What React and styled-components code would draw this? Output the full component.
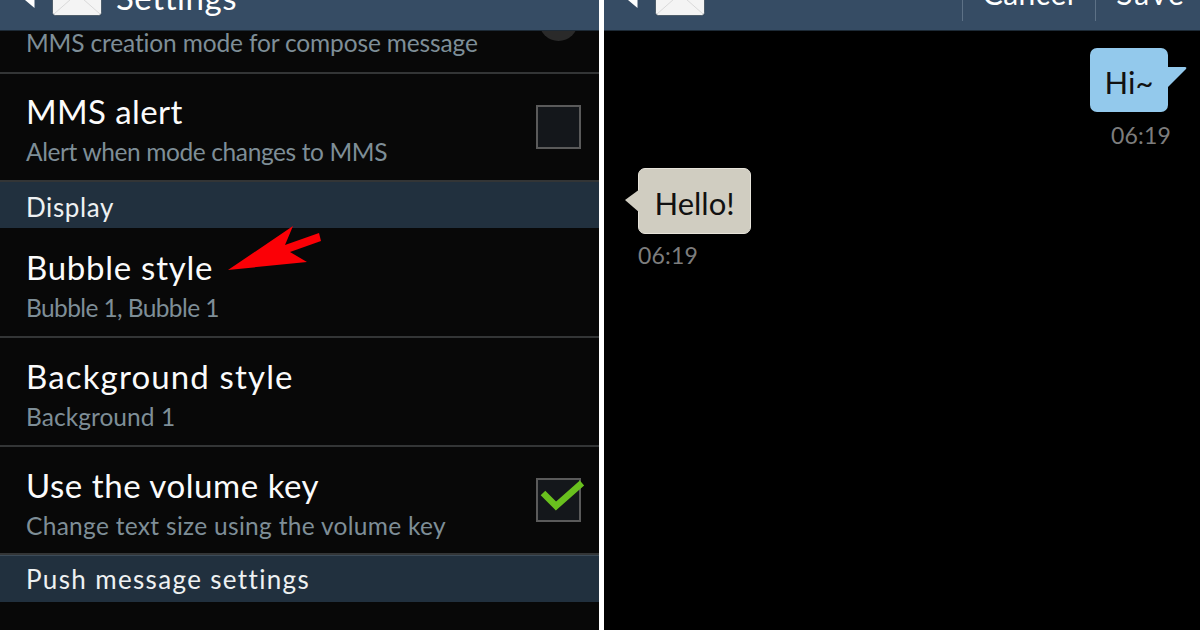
import React from 'react';
import styled, { createGlobalStyle } from 'styled-components';

const Global = createGlobalStyle`
  html, body {
    margin: 0;
    width: 1200px;
    height: 630px;
    overflow: hidden;
    background: #fff;
    font-family: "Lato", "Open Sans", sans-serif;
  }
`;

const Screens = styled.div`
  display: grid;
  grid-template-columns: 599px 596px;
  column-gap: 5px;
  width: 1200px;
  height: 630px;
  overflow: hidden;
  background: #fff;
`;

const Phone = styled.div`
  position: relative;
  height: 630px;
  overflow: hidden;
  background: ${(p) => p.$bg};
  display: flex;
  flex-direction: column;
`;

const Header = styled.div`
  position: relative;
  z-index: 1;
  flex: none;
  height: 30px;
  display: flex;
  align-items: flex-end;
  overflow: hidden;
  background: #364c64;
  border-bottom: 1px solid #1d2a36;
`;

const Back = styled.svg`
  flex: none;
  width: 10px;
  height: 16px;
  margin: 0 0 22px ${(p) => p.$left}px;
`;

const Envelope = styled.svg`
  flex: none;
  width: 50px;
  height: 40px;
  margin: 0 0 14px 17px;
`;

const Title = styled.span`
  flex: none;
  margin: 0 0 16px 14px;
  color: #fff;
  font-size: 33px;
  line-height: 33px;
  letter-spacing: 0.57px;
`;

const Actions = styled.div`
  margin-left: auto;
  display: flex;
  align-items: flex-end;
  height: 100%;
`;

const Action = styled.span`
  display: flex;
  align-items: flex-end;
  justify-content: center;
  width: ${(p) => p.$w}px;
  height: 100%;
  color: #fff;
  font-size: 30px;
  line-height: 30px;
  letter-spacing: ${(p) => p.$track}px;
  position: relative;
  padding-left: ${(p) => p.$pad}px;
  padding-bottom: 22px;
  box-sizing: border-box;
  &::before {
    content: '';
    position: absolute;
    left: 0;
    top: 0;
    height: 21px;
    width: 1px;
    background: #5d7186;
  }
`;

const Row = styled.div`
  flex: none;
  box-sizing: border-box;
  height: ${(p) => p.$h}px;
  display: flex;
  align-items: flex-start;
  justify-content: space-between;
  padding: ${(p) => p.$top}px 18px 0 26px;
  background: #080808;
  border-bottom: 2px solid #333536;
`;

const Copy = styled.div`
  display: flex;
  flex-direction: column;
`;

const Name = styled.div`
  color: #fbfbfb;
  font-size: 33px;
  line-height: 40px;
  letter-spacing: ${(p) => p.$track}px;
  white-space: nowrap;
`;

const Note = styled.div`
  color: #7e8e97;
  font-size: 24.5px;
  line-height: 36px;
  margin-top: ${(p) => p.$gap}px;
  letter-spacing: ${(p) => p.$track}px;
  white-space: nowrap;
`;

const Section = styled.div`
  flex: none;
  box-sizing: border-box;
  height: ${(p) => p.$h}px;
  padding: ${(p) => p.$top}px 0 0 26px;
  background: #21303e;
  color: #eef1f2;
  font-size: 26px;
  line-height: 36px;
  letter-spacing: ${(p) => p.$track}px;
  border-top: 1px solid ${(p) => p.$line || '#21303e'};
`;

const Check = styled.div`
  position: relative;
  flex: none;
  box-sizing: border-box;
  width: 45px;
  height: 44px;
  margin-top: ${(p) => p.$top}px;
  background: #14171b;
  border: 2px solid #5a5a5a;
`;

const Tick = styled.svg`
  position: absolute;
  left: 0;
  top: 0;
  width: 48px;
  height: 34px;
  overflow: visible;
`;

const Knob = styled.div`
  position: absolute;
  left: 539px;
  top: 2px;
  width: 39px;
  height: 39px;
  border-radius: 50%;
  background: #2a2a2a;
`;

const Arrow = styled.svg`
  position: absolute;
  left: 0;
  top: 0;
  width: 600px;
  height: 630px;
  pointer-events: none;
`;

const Thread = styled.div`
  flex: 1;
  display: flex;
  flex-direction: column;
  padding: 17px 13px 0 20px;
`;

const Message = styled.div`
  display: flex;
  flex-direction: column;
  align-items: ${(p) => (p.$mine ? 'flex-end' : 'flex-start')};
  margin-top: ${(p) => p.$gap}px;
  padding-right: ${(p) => (p.$mine ? 19 : 0)}px;
  padding-left: ${(p) => (p.$mine ? 0 : 14)}px;
`;

const Bubble = styled.div`
  position: relative;
  box-sizing: border-box;
  display: flex;
  align-items: center;
  justify-content: center;
  width: ${(p) => p.$w}px;
  height: ${(p) => p.$h}px;
  padding-top: 4px;
  border-radius: 7px;
  color: #111;
  font-size: 31px;
  background: ${(p) => (p.$mine ? '#93c9ec' : '#d0cdc1')};
  border: ${(p) => (p.$mine ? 'none' : '1px solid #e6e3da')};
`;

const Tail = styled.svg`
  position: absolute;
  top: ${(p) => p.$top}px;
  ${(p) => (p.$mine ? 'right: -19px;' : 'left: -15px;')}
  width: ${(p) => (p.$mine ? 20 : 16)}px;
  height: 24px;
`;

const Stamp = styled.div`
  color: #7d7d7d;
  font-size: 23px;
  line-height: 30px;
  margin-top: ${(p) => p.$gap}px;
  margin-right: ${(p) => (p.$mine ? -3 : 0)}px;
  letter-spacing: 0.2px;
`;

function HeaderIcons({ left }) {
  return (
    <>
      <Back $left={left} viewBox="0 0 10 16">
        <path d="M0 8 L9.5 16 L9.5 0 Z" fill="#fff" />
      </Back>
      <Envelope viewBox="0 0 50 40">
        <rect x="0.5" y="0" width="49" height="39.5" rx="3" fill="#f4f4f4" stroke="#20303f" strokeWidth="0.6" />
        <path d="M2 38 L19 23 M48 38 L31 23" fill="none" stroke="#d9d9d9" strokeWidth="1" />
      </Envelope>
    </>
  );
}

function SettingRow({ name, note, h, top = 18, nameTrack, noteTrack = 0.3, checked, unchecked }) {
  return (
    <Row $h={h} $top={top}>
      <Copy>
        <Name $track={nameTrack}>{name}</Name>
        <Note $gap={3} $track={noteTrack}>{note}</Note>
      </Copy>
      {(checked || unchecked) && (
        <Check $top={checked ? 13 : 14}>
          {checked && (
            <Tick viewBox="0 0 48 34">
              <path d="M5 13 L18 26 L44 3" fill="none" stroke="#69c01e" strokeWidth="6.5" />
            </Tick>
          )}
        </Check>
      )}
    </Row>
  );
}

export default function App() {
  return (
    <>
      <Global />
      <Screens>
        <Phone $bg="#080808">
          <Header>
            <HeaderIcons left={25} />
            <Title>Settings</Title>
          </Header>
          <Row $h={43} $top={0}>
            <Note $gap={-6} $track={-0.15}>MMS creation mode for compose message</Note>
          </Row>
          <Knob />
          <SettingRow h={108} top={17} name="MMS alert" nameTrack={0.4} note="Alert when mode changes to MMS" noteTrack={-0.39} unchecked />
          <Section $h={46} $top={6} $track={0.6}>Display</Section>
          <SettingRow h={110} top={19} name="Bubble style" nameTrack={0.73} note="Bubble 1, Bubble 1" noteTrack={-0.6} />
          <SettingRow h={109} name="Background style" nameTrack={1.15} note="Background 1" noteTrack={0.05} />
          <SettingRow h={108} name="Use the volume key" nameTrack={0.55} note="Change text size using the volume key" checked />
          <Section $h={47} $top={5} $track={1.35} $line="#3c4b58">Push message settings</Section>
          <Row $h={60} $top={20}>
            <Name $track={0.55}>Push message</Name>
          </Row>
          <Arrow viewBox="0 0 600 630">
            <path d="M228 270 L293 226 L285 245 L319 233 L321 241 L290 252 L307 262 Z" fill="#fb0006" />
          </Arrow>
        </Phone>
        <Phone $bg="#000">
          <Header>
            <HeaderIcons left={24} />
            <Actions>
              <Action $w={133} $pad={0} $track={0.5}>Cancel</Action>
              <Action $w={105} $pad={7} $track={2}>Save</Action>
            </Actions>
          </Header>
          <Thread>
            <Message $mine $gap={0}>
              <Bubble $mine $w={78} $h={64}>
                Hi~
                <Tail $mine $top={18} viewBox="0 0 20 24">
                  <path d="M0 1 L18 1 Q20 1 19 3 L0 22 Z" fill="#93c9ec" />
                </Tail>
              </Bubble>
              <Stamp $mine $gap={8}>06:19</Stamp>
            </Message>
            <Message $gap={18}>
              <Bubble $w={113} $h={66}>
                Hello!
                <Tail $top={20} viewBox="0 0 16 24">
                  <path d="M16 0 L1 11 L16 24 Z" fill="#d0cdc1" />
                </Tail>
              </Bubble>
              <Stamp $gap={6}>06:19</Stamp>
            </Message>
          </Thread>
        </Phone>
      </Screens>
    </>
  );
}
